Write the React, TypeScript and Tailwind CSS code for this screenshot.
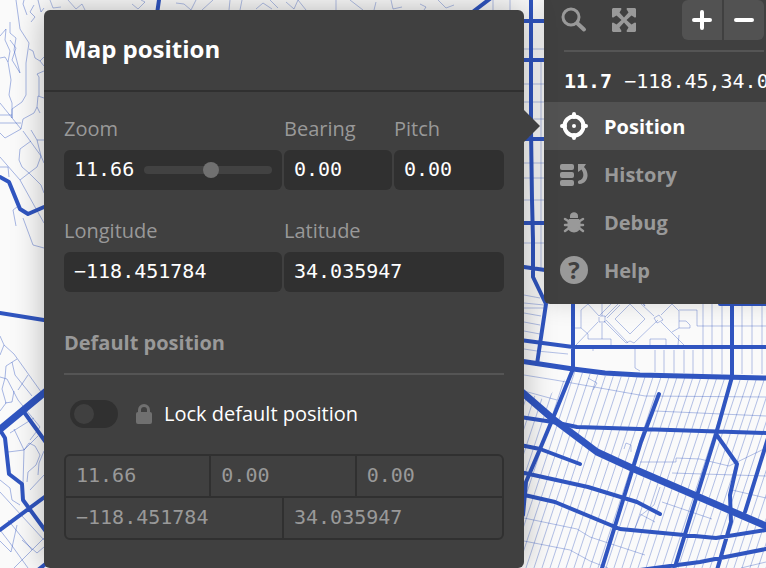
import { useState, type ReactNode } from "react";

const range = (count: number) => Array.from({ length: count }, (_, i) => i);

const slantedStreets = range(42)
  .map((i) => `M${536 + i * 8} 368 l-70 212`)
  .join("");

const gardenStreets =
  "M573 328H581V310L588 304M581 328L588 334V339M576 345L598 322M588 304L599 316L612 303M602 303V316M602 323V339M588 339H611V346M604 321L626 343M606 320L628 343M605 317L618 304M607 318L620 305M615 319L630 304L645 319L630 334ZM600 316H605V322H599V317M626 343L630 341L634 343L658 320M630 304L629 302M640 303L654 316M654 318L659 315L663 320L657 323ZM661 315L672 304L679 311V328L672 332M661 322L684 345M650 345V339H666V345M643 304L645 306L643 302M679 310H697V326H766M679 321H686L690 325V328H679M593 347V351M635 348V368L640 371M678 345L679 335";

const leftStreets =
  "M16 0L20 29L29 43L26 63V95L22 102L12 109V118M10 22V33L16 38L14 50L20 73L12 60L16 48L10 40M0 36L6 29L5 40L10 51L8 62L11 80L9 95L12 103V118M0 58L5 57L8 62M0 103L21 129L5 138L0 133M0 115H12M0 123H21M21 129L23 119L34 113L37 107L38 96L44 98M37 107L40 113M39 96V77L37 74L44 71M29 49L33 51L35 58L40 61L44 57M40 61L44 66M23 131L41 156L44 163M31 130L37 140H44M31 141L20 149L19 160L22 167L29 173L37 167L41 156L37 140M29 173L20 180L35 207L44 223M29 173L41 185L44 193M0 157L20 180M0 167H8L9 177M17 207L13 210L16 226M23 218L33 245L44 248M24 0L23 4L27 15M34 5L30 12L35 17L31 22M38 0L41 12L44 8M0 336L4 345L14 354L44 396M4 345L0 355M17 359L6 366L5 378L2 389L6 403L0 411M0 377L7 379L18 400L40 427L30 440M12 362L15 375L32 396M18 390L28 375M5 403L12 402L14 391M10 433L34 418M14 429L24 450L23 484M8 452L24 450L38 436M24 450L29 443L35 446L40 455L36 465L28 472L27 482M38 475L39 463L44 451M30 490L44 475M0 480L10 488L12 500L20 505M0 492L44 540M17 525L11 552L0 541M8 520L32 550M14 568L44 538M0 530L10 543L28 568M22 540L37 553L44 547";

const topStreets =
  "M50 0L53 8L61 7M68 0L76 9L82 4L85 10M132 4L138 9L145 2L141 0M176 3L184 4L191 10L196 0M202 10L213 0M230 0L229 10M242 0L240 10M256 9L263 3L272 9M270 0L278 8M286 2L294 9L298 0L306 10M336 0V10M350 0L363 10M376 2L374 10M391 0L393 9L402 7M420 4L426 7L424 10M438 0L446 8L454 5M510 0V10M493 0V10";

const minorCross =
  "M524 375L555 380L645 396L766 397M524 391L557 400M655 411L766 416M640 462H676V458L700 459L729 466L766 448M672 473L766 476M662 502L712 519M732 490L766 498M524 518L577 529L590 537L645 555M524 541L570 550L590 561L608 568M524 303L544 305M524 313L541 316M524 322L540 325M524 331L540 334M524 349L537 351L568 354M588 378L597 383L593 390M624 449L626 443L631 445V452M524 308H545M635 528L640 516L654 505L660 487M640 514L655 522M741 568L766 562";

const majorRoads =
  "M531 0V130L532 200L533 240L533 277L546 304L537 364M524 21H545M524 60H545M524 139H545M524 223H545M524 267L545 270M573 300V369M720 304H766M520 340L573 347L766 347M573 369L553 418L540 449L526 482L523 515M520 417L553 422L577 427L766 433M520 445L540 449L580 464M520 472L588 487L637 502L660 514M520 494L555 502L620 529L716 538L766 530M659 394L641 442L602 568M732 303V377L716 434L674 570M716 434L737 464L730 495L731 522L717 570M768 438L745 512M640 570L700 562L766 549M0 177L9 182L20 209L28 214L44 207M0 313L50 321M0 430L5 438L9 474L22 484L23 500L50 537M0 530L50 493M24 412L50 448M38 570L48 562M159 0L157 14M491 -2L470 14";

function StreetMap() {
  return (
    <svg
      className="absolute inset-0 h-full w-full"
      viewBox="0 0 766 568"
      preserveAspectRatio="xMidYMid slice"
      fill="none"
      aria-hidden="true"
    >
      <defs>
        <clipPath id="southGrid">
          <path d="M573 371L605 376L766 380V568H520V390L545 400Z" />
        </clipPath>
      </defs>
      <g stroke="#3355c0" strokeOpacity="0.36" strokeWidth="1">
        <path d={slantedStreets} clipPath="url(#southGrid)" />
        <path d={gardenStreets} />
        <path d={leftStreets} strokeOpacity="0.42" />
        <path d={topStreets} />
        <path d={minorCross} />
        <path d="M541 62V268M524 49H545M524 84H545M524 102H545M524 119H545M524 163H545M524 178H545M524 200H545M524 243H545M524 295L540 298" />
        <path d="M655 350V372M664 350V373M674 350V373M684 350V373M693 350V374M703 304V374M712 304V374M722 304V374M742 304V374M752 304V374M762 304V374" />
      </g>
      <g stroke="#3055c0" strokeLinecap="round" strokeLinejoin="round">
        <path strokeWidth="4" d={majorRoads} />
        <path strokeWidth="5" d="M520 361L573 369L605 373L640 375L766 378" />
        <path
          strokeWidth="7"
          d="M516 387L553 419L597 452L634 469L766 526M-2 431L50 388"
        />
      </g>
    </svg>
  );
}

type FieldProps = {
  id: string;
  label: string;
  value: string;
  className: string;
  children?: ReactNode;
};

function Field({ id, label, value, className, children }: FieldProps) {
  return (
    <div className={className}>
      <label htmlFor={id} className="block h-[33px] leading-6 text-[#999]">
        {label}
      </label>
      <div className="flex h-10 items-center rounded-md bg-[#303030] px-[10px]">
        <input
          id={id}
          type="text"
          defaultValue={value}
          className="h-10 w-15 min-w-0 grow bg-transparent pb-[2px] font-['DejaVu_Sans_Mono',monospace] text-white outline-none"
        />
        {children}
      </div>
    </div>
  );
}

function DefaultValue({ label, value }: { label: string; value: string }) {
  return (
    <input
      aria-label={label}
      readOnly
      value={value}
      className="h-10 w-full min-w-0 bg-transparent px-[10px] pb-[2px] font-['DejaVu_Sans_Mono',monospace] text-[#999] outline-none"
    />
  );
}

function PositionPanel() {
  const [zoom, setZoom] = useState(11.66);
  const [locked, setLocked] = useState(false);

  return (
    <section className="relative mt-[10px] w-[480px] shrink-0 rounded-md bg-[#404040] pb-7 shadow-[0_0_32px_rgba(0,0,0,0.28)]">
      <svg
        className="absolute top-[100px] left-full h-8 w-4"
        viewBox="0 0 16 32"
        aria-hidden="true"
      >
        <path d="M0 0L16 16L0 32Z" fill="#404040" />
      </svg>
      <header className="border-b-2 border-[#303030] px-5 pt-[23px] pb-[25px]">
        <h1 className="text-2xl leading-8 font-bold text-white">Map position</h1>
      </header>
      <div className="px-5 pt-[25px]">
        <div className="flex gap-[2px]">
          <Field id="zoom" label="Zoom" value="11.66" className="w-[218px]">
            <input
              type="range"
              aria-label="Zoom level"
              min={0}
              max={22}
              step={0.01}
              value={zoom}
              onChange={(e) => setZoom(Number(e.target.value))}
              className="ml-[10px] h-2 w-32 shrink-0 appearance-none rounded-full bg-[#424242] [&::-webkit-slider-thumb]:size-4 [&::-webkit-slider-thumb]:appearance-none [&::-webkit-slider-thumb]:rounded-full [&::-webkit-slider-thumb]:bg-[#707070]"
            />
          </Field>
          <Field id="bearing" label="Bearing" value="0.00" className="w-[108px]" />
          <Field id="pitch" label="Pitch" value="0.00" className="w-0 grow" />
        </div>
        <div className="mt-[29px] flex gap-[2px]">
          <Field id="lng" label="Longitude" value="−118.451784" className="w-[218px]" />
          <Field id="lat" label="Latitude" value="34.035947" className="w-0 grow" />
        </div>
        <h2 className="mt-[37px] border-b-2 border-[#555] pb-4 leading-7 font-bold text-[#999]">
          Default position
        </h2>
        <div className="mt-[25px] flex items-center pl-[6px]">
          <input
            id="lock"
            type="checkbox"
            checked={locked}
            onChange={(e) => setLocked(e.target.checked)}
            className="flex h-7 w-12 appearance-none items-center rounded-full bg-[#303030] px-1 before:size-5 before:rounded-full before:bg-[#404040] checked:justify-end"
          />
          <label htmlFor="lock" className="flex items-center leading-7 text-white">
            <svg className="mr-3 ml-[18px] h-5 w-4" viewBox="0 0 16 20" aria-hidden="true">
              <path d="M3.500 10V6a4.500 4.500 0 0 1 9 0v4" fill="none" stroke="#707070" strokeWidth="3" />
              <rect y="8" width="16" height="12" rx="2" fill="#707070" />
            </svg>
            Lock default position
          </label>
        </div>
        <div className="mt-[26px] divide-y-2 divide-[#303030] rounded-md border-2 border-[#303030]">
          <div className="grid grid-cols-3 divide-x-2 divide-[#303030]">
            <DefaultValue label="Default zoom" value="11.66" />
            <DefaultValue label="Default bearing" value="0.00" />
            <DefaultValue label="Default pitch" value="0.00" />
          </div>
          <div className="grid grid-cols-2 divide-x-2 divide-[#303030]">
            <DefaultValue label="Default longitude" value="−118.451784" />
            <DefaultValue label="Default latitude" value="34.035947" />
          </div>
        </div>
      </div>
    </section>
  );
}

function SearchIcon() {
  return (
    <svg className="size-7" viewBox="0 0 28 28" fill="none" stroke="currentColor" aria-hidden="true">
      <circle cx="11" cy="11" r="8" strokeWidth="3" />
      <path d="M17.500 17.500L24 23.500" strokeWidth="4" strokeLinecap="round" />
    </svg>
  );
}

function ExpandIcon() {
  return (
    <svg className="size-6" viewBox="0 0 24 24" fill="currentColor" aria-hidden="true">
      <path d="M1 0H9Q10 1 9 2L7.500 4.500L12 9.500L16.500 4.500L15 2Q14 1 15 0H23L24 1V9Q23 10 22 9L19.500 7.500L14.500 12L19.500 16.500L22 15Q23 14 24 15V23L23 24H15Q14 23 15 22L16.500 19.500L12 14.500L7.500 19.500L9 22Q10 23 9 24H1L0 23V15Q1 14 2 15L4.500 16.500L9.500 12L4.500 7.500L2 9Q1 10 0 9V1Z" />
    </svg>
  );
}

function TargetIcon() {
  return (
    <svg className="size-7" viewBox="0 0 28 28" fill="none" stroke="currentColor" aria-hidden="true">
      <circle cx="14" cy="14" r="9.500" strokeWidth="4" />
      <circle cx="14" cy="14" r="2" fill="currentColor" stroke="none" />
      <path d="M14 2V5M14 23V26M2 14H5M23 14H26" strokeWidth="4" strokeLinecap="round" />
    </svg>
  );
}

function HistoryIcon() {
  return (
    <svg className="size-7" viewBox="0 0 28 28" fill="currentColor" aria-hidden="true">
      <rect y="4" width="14" height="6" rx="2" />
      <rect y="12" width="14" height="6" rx="2" />
      <rect y="20" width="14" height="6" rx="2" />
      <path d="M18 4H26L24 7C29.500 12 29 23 19.500 24C17.500 24 17.500 21 19 20.500C24 19 24.500 14 21.500 9.500L18 12Z" />
    </svg>
  );
}

function BugIcon() {
  return (
    <svg className="size-7" viewBox="0 0 28 28" fill="currentColor" aria-hidden="true">
      <path d="M10 10V8C10 3 18 3 18 8V10Z" />
      <path d="M9 11H19L20.500 14V18C20.500 26.500 7.500 26.500 7.500 18V14Z" />
      <path
        d="M9 13.500L5 11M19 13.500L23 11M9 17H5M19 17H23M9 20L5 23M19 20L23 23"
        fill="none"
        stroke="currentColor"
        strokeWidth="2.500"
        strokeLinecap="round"
      />
    </svg>
  );
}

function HelpIcon() {
  return (
    <span
      aria-hidden="true"
      className="flex size-7 items-center justify-center rounded-full bg-[#999] text-2xl leading-7 font-bold text-[#404040]"
    >
      ?
    </span>
  );
}

function MenuItem({ icon, label, active = false }: { icon: ReactNode; label: string; active?: boolean }) {
  return (
    <button
      type="button"
      aria-pressed={active}
      className={
        active
          ? "flex h-12 w-full items-center gap-4 bg-[#525252] pl-4 font-bold text-white"
          : "flex h-12 w-full items-center gap-4 pl-4 font-bold text-[#999]"
      }
    >
      {icon}
      <span className="pt-[2px]">{label}</span>
    </button>
  );
}

function Sidebar() {
  return (
    <aside className="ml-5 w-60 shrink-0 self-start overflow-hidden rounded-b-md bg-[#404040] pb-[10px] shadow-[0_0_24px_rgba(0,0,0,0.14)]">
      <div className="mx-5 flex h-[52px] border-b-2 border-[#555] text-[#999]">
        <button type="button" aria-label="Search" className="-ml-1 flex h-10 items-center">
          <SearchIcon />
        </button>
        <button type="button" aria-label="Full screen" className="ml-6 flex h-10 items-center">
          <ExpandIcon />
        </button>
        <div className="ml-auto flex gap-[2px]">
          <button
            type="button"
            aria-label="Zoom in"
            className="flex size-10 items-center justify-center rounded-l-md bg-[#525252] text-white"
          >
            <svg className="size-5" viewBox="0 0 20 20" stroke="currentColor" strokeWidth="4" strokeLinecap="round" aria-hidden="true">
              <path d="M10 2V18M2 10H18" />
            </svg>
          </button>
          <button
            type="button"
            aria-label="Zoom out"
            className="flex size-10 items-center justify-center rounded-r-md bg-[#525252] text-white"
          >
            <svg className="size-5" viewBox="0 0 20 20" stroke="currentColor" strokeWidth="4" strokeLinecap="round" aria-hidden="true">
              <path d="M2 10H18" />
            </svg>
          </button>
        </div>
      </div>
      <p className="pt-[15px] pb-[7px] pl-5 font-['DejaVu_Sans_Mono',monospace] leading-7 whitespace-nowrap text-white">
        <strong>11.7</strong> −118.45,34.0
      </p>
      <nav>
        <MenuItem icon={<TargetIcon />} label="Position" active />
        <MenuItem icon={<HistoryIcon />} label="History" />
        <MenuItem icon={<BugIcon />} label="Debug" />
        <MenuItem icon={<HelpIcon />} label="Help" />
      </nav>
    </aside>
  );
}

export default function App() {
  return (
    <main className="relative min-h-screen overflow-hidden bg-[#fafafa] font-['Open_Sans',sans-serif] text-xl">
      <StreetMap />
      <div className="relative flex items-start pl-11">
        <PositionPanel />
        <Sidebar />
      </div>
    </main>
  );
}
